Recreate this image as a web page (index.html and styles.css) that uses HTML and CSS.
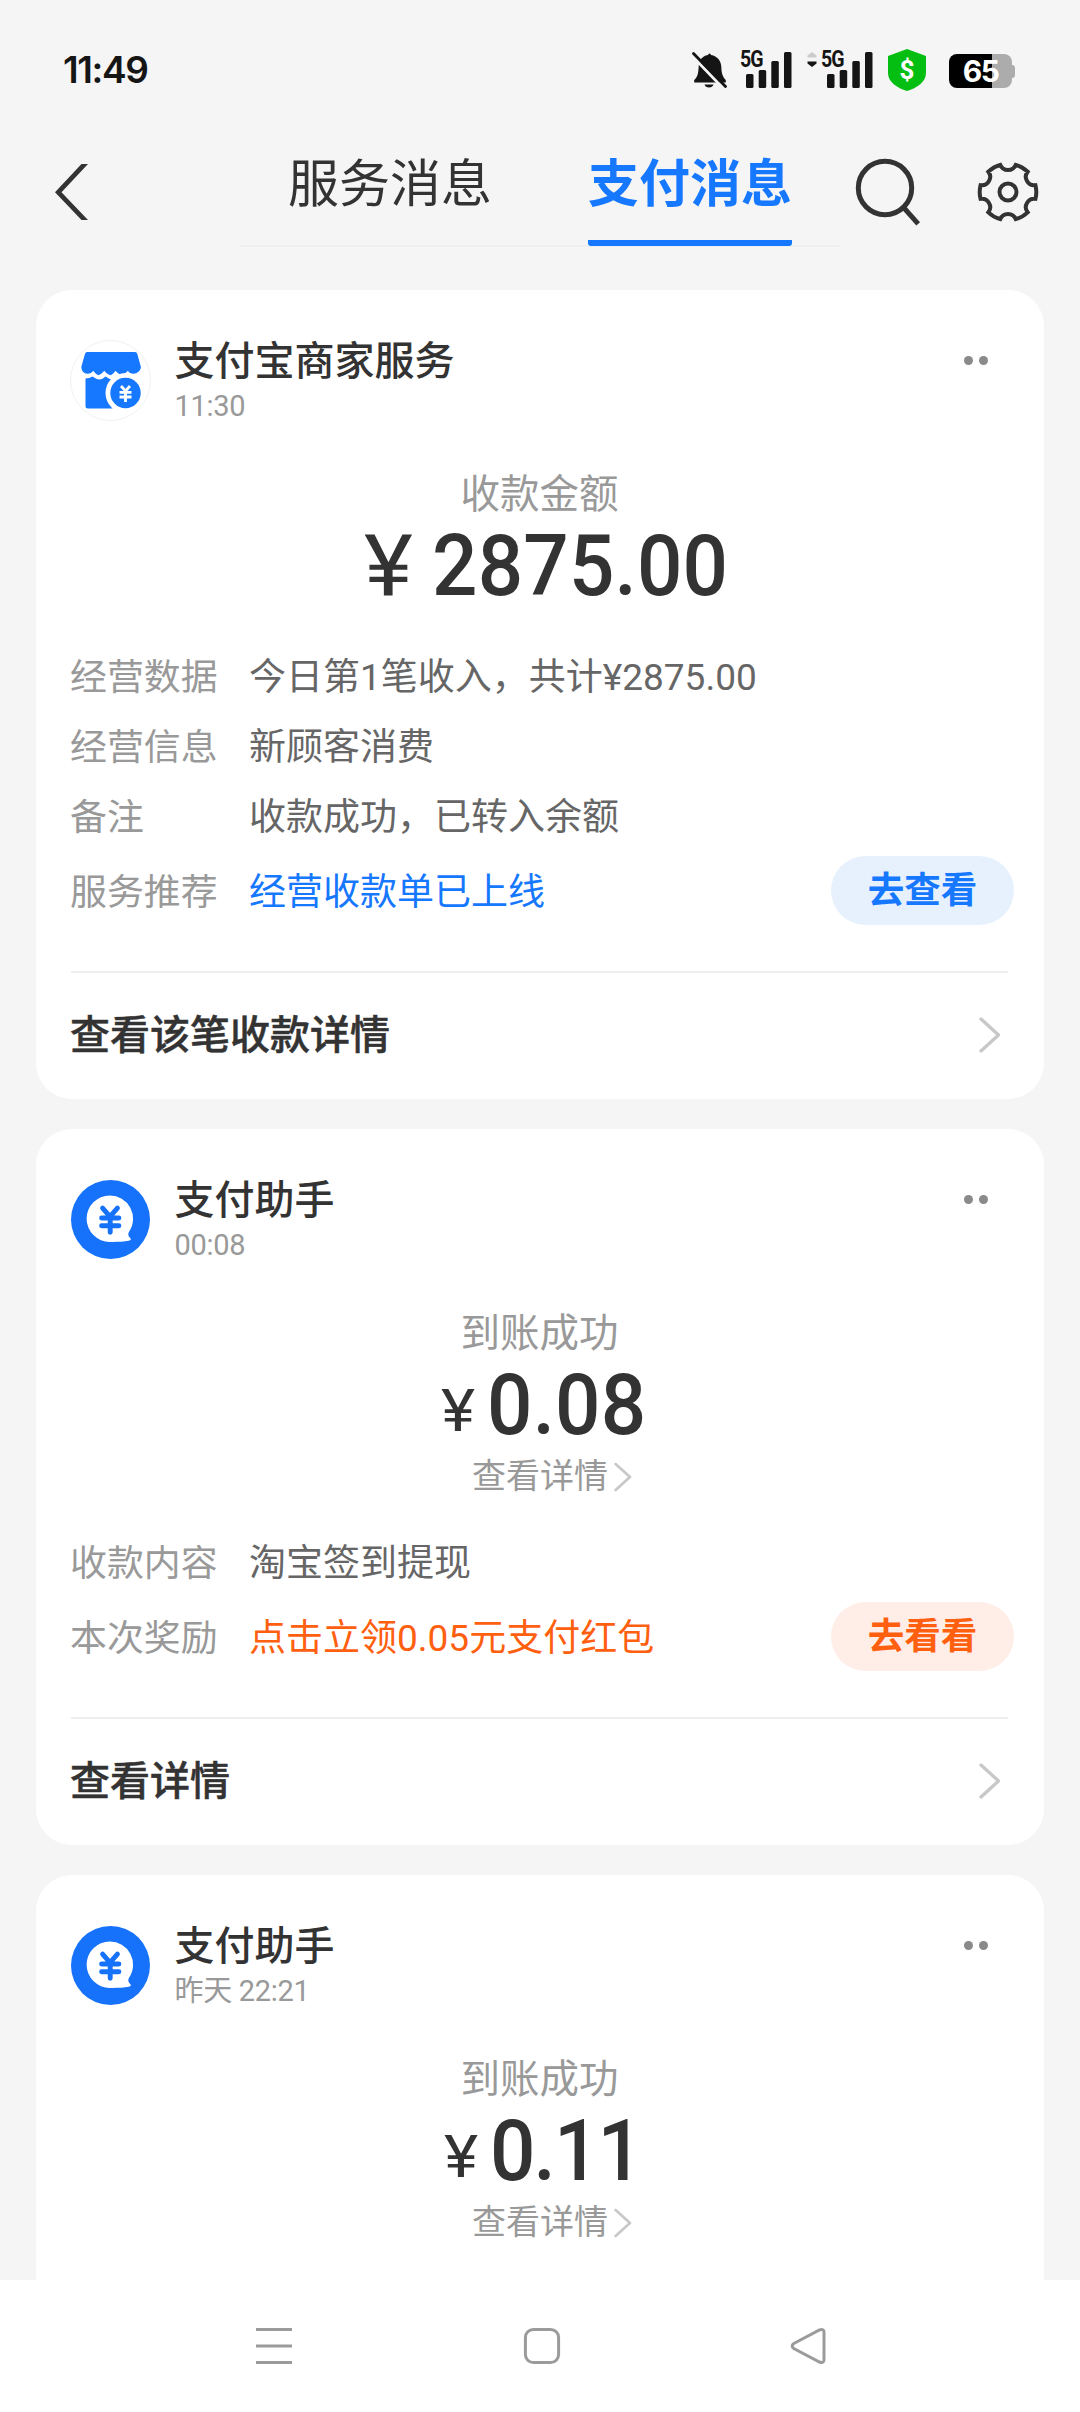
FILE: index.html
```html
<!DOCTYPE html>
<html lang="zh-CN">
<head>
<meta charset="utf-8">
<title>支付消息</title>
<link rel="stylesheet" href="styles.css">
</head>
<body>
<svg class="defs" aria-hidden="true">
  <symbol id="helper" viewBox="0 0 80 80">
    <circle cx="40" cy="40" r="40" fill="#1772fb"/>
    <path d="M39.3 15.7a23.4 23.4 0 0 1 19.600 36.400q-2 3.300 0.600 6.200c2.200 2 0.800 2.900-1 3.300c-5 1.200-13 1.100-19.200 1.100a23.500 23.500 0 0 1 0-47z" fill="#fff"/>
    <path d="M32 28.500l7.500 8.500 7.500-8.500M31 38.500h17.500M31 46.300h17.500M39.700 37.500v15.500" fill="none" stroke="#1772fb" stroke-width="5" stroke-linecap="round" stroke-linejoin="round"/>
  </symbol>
  <symbol id="bars" viewBox="0 0 46 36">
    <rect x="0" y="22" width="7.500" height="14" rx="1.500"/>
    <rect x="12.700" y="18" width="7.500" height="18" rx="1.500"/>
    <rect x="25.300" y="9" width="7.500" height="27" rx="1.500"/>
    <rect x="38" y="0" width="7.500" height="36" rx="1.500"/>
  </symbol>
  <symbol id="chevron" viewBox="0 0 22 36">
    <path d="M2 2l17.500 16-17.500 16" fill="none" stroke="#c8c8c8" stroke-width="3.300" stroke-linecap="round" stroke-linejoin="round"/>
  </symbol>
</svg>
<div class="screen">
  <div class="statusbar">
    <span class="clock">11:49</span>
    <div class="status-icons">
      <svg class="bell" viewBox="0 0 36 36"><path d="M17.500 1.500q1.200 0 1.500 1.500c6.500 1 10 6 10.300 11.500.200 6 1 10 4.500 13.500v2.500H2.200v-2.500c4-3.500 4-7.500 4.500-13.500C7 9 9.500 4 16 3q.3-1.500 1.500-1.500z"/><path d="M12.500 32.500h9q-1 3-4.500 3t-4.500-3z"/><path d="M-.2 3.500L30 35" stroke="#f5f5f5" stroke-width="3"/><path d="M1.500 1.500L33.500 34.500" stroke="#151515" stroke-width="2.800" stroke-linecap="round"/></svg>
      <div class="signal"><span class="net">5G</span><svg viewBox="0 0 46 36"><use href="#bars"/></svg></div>
      <svg class="traffic" viewBox="0 0 10 15"><path d="M5 0l4.500 3.500v2h-9v-2z" fill="#ccc"/><path d="M5 15l4.500-3.500v-2h-9v2z"/></svg>
      <div class="signal second"><span class="net">5G</span><svg viewBox="0 0 46 36"><use href="#bars"/></svg></div>
      <div class="shield"><svg viewBox="0 0 38 42"><path d="M19 0l19 7v17c0 9-9 15-19 18C9 39 0 33 0 24V7z" fill="#04be12"/></svg><span class="dollar">$</span></div>
      <div class="battery"><span class="level">65</span></div>
    </div>
  </div>
  <header class="topbar">
    <svg class="back" viewBox="0 0 34 58"><path d="M33 1h-6.500L0 29.200 26.500 57H33L6.500 29.200z" fill="#333"/></svg>
    <nav class="tabs">
      <span class="tab">服务消息</span>
      <span class="tab active">支付消息</span>
    </nav>
    <svg class="search" viewBox="0 0 66 68"><g fill="none" stroke="#333" stroke-width="5"><circle cx="30" cy="30" r="26.700"/><path d="M49 50l12.500 14" stroke-linecap="square"/></g></svg>
    <svg class="gear" viewBox="-31 -31 62 62"><g fill="none" stroke="#333" stroke-width="4"><path d="M-7.800-27.200A8.400 8.400 0 0 0 7.800-27.200A28.300 28.300 0 0 1 19.660-20.360A8.400 8.400 0 0 0 27.460-6.850A28.300 28.300 0 0 1 27.460 6.850A8.400 8.400 0 0 0 19.660 20.360A28.300 28.300 0 0 1 7.800 27.200A8.400 8.400 0 0 0-7.800 27.200A28.300 28.300 0 0 1-19.660 20.360A8.400 8.400 0 0 0-27.460 6.850A28.300 28.300 0 0 1-27.460-6.850A8.400 8.400 0 0 0-19.660-20.360A28.300 28.300 0 0 1-7.800-27.200z"/><circle r="8.500"/></g></svg>
  </header>
  <main class="feed">
    <article class="card">
      <div class="head">
        <svg class="avatar" viewBox="0 0 81 81"><circle cx="40.500" cy="40.500" r="40" fill="#fff" stroke="#f1f1f1"/><path d="M17 12h50q1.700 0 2.200 1.700l3.800 13c0 4-4 7-7.500 7-3 0-5-1-6-3-2 2-4 3.500-6 4.500-3-1-5-2.500-7-4.500-1.500 2-3 3.500-5 4.500-3-1-5-2.500-6.500-4.500-2 2-4 3.500-6 4.500-2.500-1-4-2.500-5.500-4.500-1.500 2-3.500 3-6 3-4 0-6.500-3-6.500-7l3.800-13Q15.300 12 17 12z" transform="translate(.8 0) scale(.96 1)" fill="#1677ff"/><path d="M15.500 38.500q4 0 7-2 4 3 7 3t6-3q4 3 7 3V68.500H18q-2.500 0-2.500-2.500z" fill="#1677ff"/><circle cx="55.500" cy="53" r="20" fill="#fff"/><circle cx="55.500" cy="53" r="15.200" fill="#1677ff"/><path d="M51 46l4.500 5 4.500-5M49.500 52.300h12M49.500 57h12M55.500 51v11" fill="none" stroke="#fff" stroke-width="2.800"/></svg>
        <div class="who"><h2>支付宝商家服务</h2><time>11:30</time></div>
        <div class="more"><i></i><i></i></div>
      </div>
      <p class="caption">收款金额</p>
      <p class="amount large"><span class="yen">¥</span><span class="num">2875.00</span></p>
      <dl class="rows">
        <div class="row"><dt>经营数据</dt><dd>今日第1笔收入，共计¥2875.00</dd></div>
        <div class="row"><dt>经营信息</dt><dd>新顾客消费</dd></div>
        <div class="row"><dt>备注</dt><dd>收款成功，已转入余额</dd></div>
        <div class="row action"><dt>服务推荐</dt><dd class="blue">经营收款单已上线</dd><a class="pill">去查看</a></div>
      </dl>
      <div class="foot"><span>查看该笔收款详情</span><svg viewBox="0 0 22 36"><use href="#chevron"/></svg></div>
    </article>
    <article class="card">
      <div class="head">
        <svg class="avatar small" viewBox="0 0 80 80"><use href="#helper"/></svg>
        <div class="who"><h2>支付助手</h2><time>00:08</time></div>
        <div class="more"><i></i><i></i></div>
      </div>
      <p class="caption">到账成功</p>
      <p class="amount"><span class="yen">¥</span><span class="num">0.08</span></p>
      <p class="detail">查看详情<svg viewBox="0 0 22 36"><use href="#chevron"/></svg></p>
      <dl class="rows">
        <div class="row"><dt>收款内容</dt><dd>淘宝签到提现</dd></div>
        <div class="row action"><dt>本次奖励</dt><dd class="orange">点击立领0.05元支付红包</dd><a class="pill warm">去看看</a></div>
      </dl>
      <div class="foot"><span>查看详情</span><svg viewBox="0 0 22 36"><use href="#chevron"/></svg></div>
    </article>
    <article class="card">
      <div class="head">
        <svg class="avatar small" viewBox="0 0 80 80"><use href="#helper"/></svg>
        <div class="who"><h2>支付助手</h2><time>昨天 22:21</time></div>
        <div class="more"><i></i><i></i></div>
      </div>
      <p class="caption">到账成功</p>
      <p class="amount ones"><span class="yen">¥</span><span class="num">0.11</span></p>
      <p class="detail">查看详情<svg viewBox="0 0 22 36"><use href="#chevron"/></svg></p>
      <div class="rest"></div>
    </article>
  </main>
  <footer class="navbar">
    <svg viewBox="0 0 36 36"><path d="M0 1.500h36M0 18h36M0 34.500h36"/></svg>
    <svg viewBox="0 0 36 36"><rect x="1.400" y="1.400" width="33.200" height="33.200" rx="8"/></svg>
    <svg viewBox="0 0 36 36"><path d="M1.800 15.500L27.500 2Q32 .5 32 4V32Q32 35.500 27.500 34L1.800 20.500Q-1.500 18 1.800 15.500z"/></svg>
  </footer>
</div>
</body>
</html>
```
FILE: styles.css
```css
* { box-sizing: border-box; }
body, h2, p, dl, dd { margin: 0; }
body {
  background: #f5f5f5;
  color: #333;
  font-family: Roboto, "Noto Sans CJK SC", sans-serif;
}
svg { display: block; flex: none; overflow: visible; }
.defs { width: 0; height: 0; position: absolute; }
.screen {
  width: 1080px;
  height: 2412px;
  display: flex;
  flex-direction: column;
  overflow: hidden;
}

/* system status bar */
.statusbar {
  height: 140px;
  flex: none;
  padding: 0 65px 0 63px;
  display: flex;
  justify-content: space-between;
  align-items: center;
}
.clock {
  font: 600 37px/40px Inter, sans-serif;
  letter-spacing: -1.400px;
  color: #151515;
}
.status-icons { display: flex; align-items: center; height: 44px; fill: #151515; }
.bell { width: 36px; height: 36px; }
.signal { position: relative; width: 52px; height: 36px; margin-left: 12px; }
.signal svg { width: 46px; height: 36px; margin-left: 6px; }
.net {
  position: absolute;
  left: 0;
  top: -2px;
  font: 700 23px/20px Roboto, sans-serif;
  letter-spacing: -1px;
  color: #151515;
  transform: scaleX(.85);
  transform-origin: left;
}
.traffic { width: 10px; height: 15px; margin: -22px 0 0 15px; }
.signal.second { margin-left: 4px; }
.shield { position: relative; width: 38px; height: 42px; margin-left: 15px; }
.dollar {
  position: absolute;
  inset: 0;
  text-align: center;
  font: 700 26px/42px Roboto, sans-serif;
  color: #fff;
}
.battery {
  position: relative;
  width: 63px;
  height: 34px;
  margin: 2px 3px 0 23px;
  border-radius: 8px;
  background: linear-gradient(90deg, #000 43px, #acacac 43px);
  text-align: center;
}
.battery::after {
  content: "";
  position: absolute;
  left: 63px;
  top: 11px;
  width: 3px;
  height: 13px;
  border-radius: 0 3px 3px 0;
  background: #acacac;
}
.level { font: 700 30px/35px Inter, sans-serif; letter-spacing: -1.500px; color: #fff; }

/* title bar */
.topbar { height: 150px; flex: none; display: flex; padding-left: 55px; }
.back { width: 34px; height: 58px; margin-top: 23px; }
.tabs {
  width: 600px;
  height: 107px;
  margin-left: 151px;
  display: flex;
  justify-content: space-between;
  padding: 0 48px;
  border-bottom: 2px solid #efefef;
}
.tab { height: 106px; font-size: 51px; line-height: 90px; }
.tab.active { color: #1677ff; font-weight: 700; border-bottom: 6px solid #1677ff; border-radius: 3px; }
.search { width: 66px; height: 68px; margin: 18px 0 0 15px; }
.gear { width: 62px; height: 62px; margin: 21px 0 0 56px; }

/* message cards */
.feed { flex: 1; min-height: 0; overflow: hidden; padding: 0 36px; display: flex; flex-direction: column; gap: 30px; }
.card { flex: none; background: #fff; border-radius: 36px; padding: 50px 36px 0 35px; }
.head { display: flex; height: 131px; }
.avatar { width: 81px; height: 81px; margin-left: -1px; }
.avatar.small { width: 79px; height: 79px; margin: 1px 1px 0 0; }
.who { flex: 1; margin-left: 23.500px; }
.who h2 { font-size: 40px; line-height: 43px; font-weight: 500; }
.who time { display: block; font-size: 29px; line-height: 34px; margin-top: 6px; letter-spacing: -.3px; color: #999; }
.more { display: flex; gap: 6px; margin: 16px 20px 0 0; }
.more i { width: 9px; height: 9px; border-radius: 50%; background: #8a8a8a; }
.caption { font-size: 39.500px; line-height: 48px; color: #999; text-align: center; }

/* digits are drawn slightly condensed, the currency sign slightly wide */
.amount {
  height: 94px;
  padding-left: 20px;
  display: flex;
  justify-content: center;
  align-items: baseline;
  font-size: 86px;
  line-height: 94px;
  font-weight: 500;
}
.yen { width: 46px; font-size: 59px; font-weight: 400; transform: translateY(-3px) scaleX(1.1); transform-origin: left; }
.num { letter-spacing: .2px; transform: scaleX(.93); transform-origin: left; }
.amount.large { padding-left: 36px; }
.large .yen { width: 68px; font-size: 86px; transform: scaleX(1.08); }
.amount.ones { padding-left: 18px; }
.ones .num { letter-spacing: -2px; }
.detail {
  display: flex;
  justify-content: center;
  align-items: center;
  gap: 6px;
  padding-left: 25px;
  font-size: 34px;
  line-height: 49px;
  color: #999;
}
.detail svg { width: 18px; height: 30px; }
.rows { margin-left: -1px; padding-top: 30px; font-size: 36.900px; line-height: 70px; }
.detail + .rows { padding-top: 28px; }
.row { display: flex; height: 70px; }
.row.action { height: 69px; margin-top: 3px; align-items: center; }
.row dt { width: 179px; color: #999; }
.row dd { flex: 1; font-size: 37px; color: #666; }
.row.action dt, .row.action dd { padding-top: 4px; }
.row dd.blue { color: #1677ff; }
.row dd.orange { color: #ff6010; }
.pill {
  width: 183px;
  height: 69px;
  margin-right: -6px;
  border-radius: 35px;
  text-align: center;
  font-size: 36.500px;
  font-weight: 700;
  line-height: 69px;
  background: #e7f1fe;
  color: #1677ff;
}
.pill.warm { background: #ffeee7; color: #ff6010; }
.foot {
  height: 128px;
  margin-top: 46px;
  padding: 0 7px 2px 0;
  border-top: 2px solid #eee;
  display: flex;
  justify-content: space-between;
  align-items: center;
  font-size: 40px;
  font-weight: 500;
  line-height: 48px;
  -webkit-text-stroke: .5px #333;
}
.foot span { margin: 1px 0 0 -1px; }
.foot svg { width: 22px; height: 36px; }
.rest { height: 200px; }

/* system navigation */
.navbar {
  height: 132px;
  flex: none;
  background: #fff;
  display: flex;
  justify-content: space-between;
  padding: 48px 252px 0 256px;
  fill: none;
  stroke: #9b9b9b;
  stroke-width: 3;
}
.navbar svg { width: 36px; height: 36px; }
```
